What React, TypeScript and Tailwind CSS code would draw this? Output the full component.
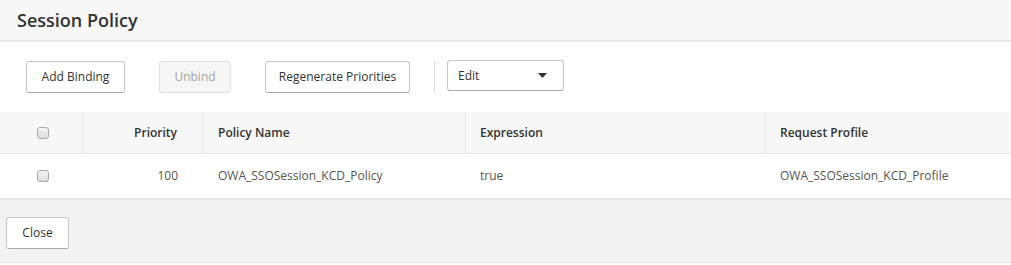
import React from 'react';

const font = { fontFamily: '"Open Sans", "Liberation Sans", sans-serif' };

const Btn: React.FC<{ label: string; disabled?: boolean; className?: string }> = ({ label, disabled, className }) => (
    <button
        className={
            disabled
                ? `h-[32px] px-0 whitespace-nowrap rounded-[3px] border border-[#e0e0e0] bg-[#f5f5f5] text-[12px] text-[#a5a5a5] ${className || ''}`
                : `h-[32px] px-0 whitespace-nowrap rounded-[3px] border border-[#c6c6c6] border-b-[#a9a9a9] bg-white text-[12px] text-[#333] ${className || ''}`
        }
    >
        {label}
    </button>
);

const Check: React.FC = () => (
    <span className="block w-[12px] h-[12px] rounded-[3px] border border-[#a8a8a8] bg-gradient-to-b from-[#f4f4f4] to-[#dcdcdc]" />
);

export default function App() {
    return (
        <div className="w-[1011px] h-[265px] bg-white text-[#333]" style={font}>
            <div className="h-[42px] bg-[#f7f7f7] border-b-2 border-[#e8e8e8] flex items-center pl-[17px]">
                <h1 className="text-[18px] font-semibold text-[#333]">Session Policy</h1>
            </div>

            <div className="h-[70px] flex items-start pt-[19px] pl-[26px]">
                <Btn label="Add Binding" className="w-[99px]" />
                <Btn label="Unbind" disabled className="w-[72px] ml-[34px]" />
                <Btn label="Regenerate Priorities" className="w-[145px] ml-[34px]" />
                <div className="w-px h-[32px] bg-[#dcdcdc] ml-[24px]" />
                <div className="ml-[12px] -mt-px w-[117px] h-[31px] rounded-[3px] border border-[#c6c6c6] border-b-[#a9a9a9] bg-white flex items-center justify-between pl-[10px] pr-[16px] text-[12px] text-[#333]">
                    <span>Edit</span>
                    <svg width="9" height="5" viewBox="0 0 9 5"><path d="M0 0h9L4.5 5z" fill="#333" /></svg>
                </div>
            </div>

            <div className="grid grid-cols-[83px_120px_263px_300px_1fr] text-[12px]">
                <div className="h-[42px] bg-[#f7f7f7] border-b border-[#e6e6e6] border-r flex items-center pl-[37px]"><Check /></div>
                <div className="h-[42px] bg-[#f7f7f7] border-b border-[#e6e6e6] border-r flex items-center justify-end pr-[25px] font-semibold text-[#333]">Priority</div>
                <div className="h-[42px] bg-[#f7f7f7] border-b border-[#e6e6e6] border-r flex items-center pl-[15px] font-semibold text-[#333]">Policy Name</div>
                <div className="h-[42px] bg-[#f7f7f7] border-b border-[#e6e6e6] border-r flex items-center pl-[14px] font-semibold text-[#333]">Expression</div>
                <div className="h-[42px] bg-[#f7f7f7] border-b border-[#e6e6e6] flex items-center pl-[14px] font-semibold text-[#333]">Request Profile</div>

                <div className="h-[46px] border-b-2 border-[#e6e6e6] flex items-center pl-[37px]"><Check /></div>
                <div className="h-[46px] border-b-2 border-[#e6e6e6] flex items-center justify-end pr-[25px] text-[#555]">100</div>
                <div className="h-[46px] border-b-2 border-[#e6e6e6] flex items-center pl-[15px] text-[#555]">OWA_SSOSession_KCD_Policy</div>
                <div className="h-[46px] border-b-2 border-[#e6e6e6] flex items-center pl-[14px] text-[#555]">true</div>
                <div className="h-[46px] border-b-2 border-[#e6e6e6] flex items-center pl-[14px] text-[#555]">OWA_SSOSession_KCD_Profile</div>
            </div>

            <div className="h-[63px] bg-[#f2f2f2] border-b border-[#e3e3e3] flex items-start pt-[17px] pl-[6px]">
                <Btn label="Close" className="w-[63px] font-medium" />
            </div>
        </div>
    );
}
